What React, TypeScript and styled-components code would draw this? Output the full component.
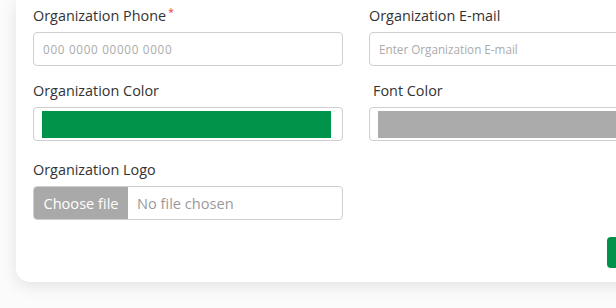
import React from 'react'
import styled, { createGlobalStyle } from 'styled-components'

const GlobalStyle = createGlobalStyle`
  html,
  body {
    margin: 0;
    padding: 0;
    overflow: hidden;
    background: #fbfbfb;
    font-family: 'Open Sans', 'Liberation Sans', sans-serif;
  }
`

const Page = styled.div`
  padding: 0 0 26px 16px;
`

const Card = styled.div`
  width: 680px;
  box-sizing: border-box;
  background: #ffffff;
  border-radius: 0 0 14px 14px;
  box-shadow: 0 4px 16px rgba(0, 0, 0, 0.1);
  padding: 6px 17px 14px 17px;
`

const Grid = styled.div`
  display: grid;
  grid-template-columns: 310px 310px;
  column-gap: 26px;
  row-gap: 15px;
`

const Field = styled.div<{ $extraTop?: number; $indent?: number }>`
  display: flex;
  flex-direction: column;
  margin-top: ${({ $extraTop }) => ($extraTop ? $extraTop + 'px' : '0')};
  & > label {
    padding-left: ${({ $indent }) => ($indent ? $indent + 'px' : '0')};
  }
`

const Label = styled.label`
  font-size: 14.4px;
  line-height: 20px;
  color: #333333;
  margin-bottom: 6px;
`

const Required = styled.sup`
  color: #e53935;
  font-size: 10px;
  margin-left: 2px;
  vertical-align: 5px;
  line-height: 0;
`

const TextInput = styled.input<{ $spacing?: number }>`
  box-sizing: border-box;
  height: 34px;
  width: 100%;
  border: 1px solid #cfcfcf;
  border-radius: 4px;
  padding: 0 9px;
  font-family: inherit;
  font-size: 11.7px;
  letter-spacing: ${({ $spacing }) => ($spacing ? $spacing + 'px' : 'normal')};
  color: #333;
  outline: none;
  &::placeholder {
    color: #ababab;
  }
`

const ColorBox = styled.div`
  box-sizing: border-box;
  height: 34px;
  border: 1px solid #cfcfcf;
  border-radius: 4px;
  padding: 3px 11px 2px 8px;
  display: flex;
`

const Swatch = styled.div<{ $color: string }>`
  flex: 1;
  background: ${({ $color }) => $color};
`

const FileBox = styled.div`
  box-sizing: border-box;
  height: 34px;
  border: 1px solid #cfcfcf;
  border-radius: 4px;
  display: flex;
  align-items: stretch;
  overflow: hidden;
  font-size: 14.6px;
`

const FileButton = styled.span`
  background: #a9a9a9;
  color: #ffffff;
  width: 94px;
  display: flex;
  align-items: center;
  justify-content: center;
`

const FileName = styled.span`
  display: flex;
  align-items: center;
  padding-left: 9px;
  color: #9a9a9a;
`

const Footer = styled.div`
  display: flex;
  justify-content: flex-end;
  margin-top: 17px;
`

const SaveButton = styled.button`
  width: 72px;
  height: 31px;
  border: none;
  border-radius: 4px;
  background: #00924a;
  color: #fff;
  font-family: inherit;
  font-size: 13px;
`

export default function App() {
  return (
    <>
      <GlobalStyle />
      <Page>
        <Card>
          <Grid>
            <Field>
              <Label>
                Organization Phone<Required>*</Required>
              </Label>
              <TextInput placeholder="000 0000 00000 0000" $spacing={0.7} />
            </Field>
            <Field>
              <Label>Organization E-mail</Label>
              <TextInput placeholder="Enter Organization E-mail" />
            </Field>
            <Field>
              <Label>Organization Color</Label>
              <ColorBox>
                <Swatch $color="#00934a" />
              </ColorBox>
            </Field>
            <Field $indent={4}>
              <Label>Font Color</Label>
              <ColorBox>
                <Swatch $color="#ababab" />
              </ColorBox>
            </Field>
            <Field $extraTop={4}>
              <Label>Organization Logo</Label>
              <FileBox>
                <FileButton>Choose file</FileButton>
                <FileName>No file chosen</FileName>
              </FileBox>
            </Field>
          </Grid>
          <Footer>
            <SaveButton>Save</SaveButton>
          </Footer>
        </Card>
      </Page>
    </>
  )
}
